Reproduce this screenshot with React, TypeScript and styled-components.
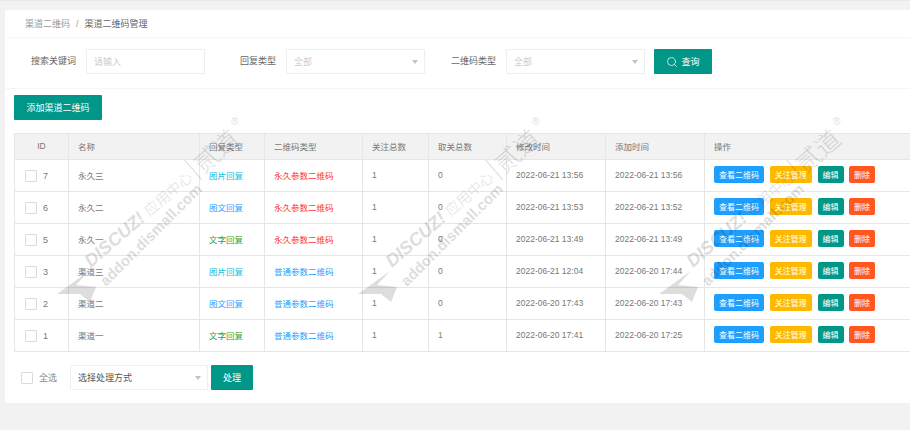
import React, { FC } from 'react';
import styled, { createGlobalStyle } from 'styled-components';
import { Search } from 'lucide-react';

const GlobalStyle = createGlobalStyle`
  html, body {
    margin: 0;
    padding: 0;
    height: 100%;
    overflow: hidden;
    background: #f2f2f2;
  }
  * {
    box-sizing: border-box;
  }
`;

const Page = styled.div`
  position: relative;
  width: 910px;
  height: 430px;
  padding: 9px 0 0 5px;
  overflow: hidden;
  border-top: 1px solid #e8e8e8;
  font-family: 'Liberation Sans', 'Noto Sans CJK SC', sans-serif;
  font-size: 9px;
  color: #666;
`;

const Card = styled.div`
  width: 960px;
  height: 393px;
  background: #fff;
`;

const Breadcrumb = styled.div`
  display: flex;
  align-items: center;
  gap: 6px;
  height: 28px;
  padding-left: 20px;
  border-bottom: 1px solid #f6f6f6;
  color: #999;
`;

const CrumbLast = styled.span`
  color: #666;
`;

const SearchRow = styled.div`
  display: flex;
  align-items: flex-start;
  height: 51px;
  padding-top: 11px;
  border-bottom: 1px solid #f6f6f6;
`;

const FieldLabel = styled.label`
  width: 81px;
  padding-right: 10px;
  line-height: 25px;
  text-align: right;
  color: #666;
`;

const Input = styled.div<{ $width: number }>`
  display: flex;
  align-items: center;
  justify-content: space-between;
  width: ${({ $width }) => $width}px;
  height: 25px;
  padding: 0 6px 0 7px;
  border: 1px solid #eee;
  border-radius: 1px;
  background: #fff;
  color: #ccc;
`;

const Caret = styled.i`
  width: 0;
  height: 0;
  border-top: 4px solid #c2c2c2;
  border-left: 3.5px solid transparent;
  border-right: 3.5px solid transparent;
`;

const PrimaryButton = styled.button`
  display: inline-flex;
  align-items: center;
  justify-content: center;
  gap: 3px;
  height: 25px;
  padding: 0;
  border: 0;
  border-radius: 1px;
  background: #009688;
  color: #fff;
  font: inherit;
`;

const QueryButton = styled(PrimaryButton)`
  width: 58px;
  margin-left: 9px;
`;

const Body = styled.div`
  padding: 6px 0 0 9px;
`;

const AddButton = styled(PrimaryButton)`
  display: flex;
  width: 88px;
`;

const Table = styled.table`
  width: 946px;
  margin-top: 13px;
  table-layout: fixed;
  border-collapse: collapse;
  font-size: 8.5px;
`;

const HeadCell = styled.th<{ $center?: boolean }>`
  height: 26px;
  padding: 0 0 2px ${({ $center }) => ($center ? 0 : 9)}px;
  border: 1px solid #e6e6e6;
  background: #f2f2f2;
  font-weight: 400;
  text-align: ${({ $center }) => ($center ? 'center' : 'left')};
  color: #777;
`;

const Cell = styled.td<{ $color?: string }>`
  height: 32px;
  padding: 0 0 2px 9px;
  border: 1px solid #e6e6e6;
  color: ${({ $color }) => $color || '#777'};
`;

const IdWrap = styled.div`
  display: flex;
  align-items: center;
  gap: 6px;
  margin-top: 2px;
  padding-left: 1px;
  font-size: 9px;
  color: #777;
`;

const Box = styled.span`
  display: inline-block;
  width: 12px;
  height: 12px;
  border: 1px solid #dcdcdc;
  border-radius: 1px;
  background: #fff;
`;

const Actions = styled.div`
  display: flex;
  gap: 5.5px;
`;

const Tag = styled.span<{ $bg: string; $width: number }>`
  display: flex;
  align-items: center;
  justify-content: center;
  width: ${({ $width }) => $width}px;
  height: 17px;
  border-radius: 2px;
  background: ${({ $bg }) => $bg};
  color: #fff;
  font-size: 8px;
`;

const Footer = styled.div`
  display: flex;
  align-items: center;
  margin-top: 13px;
  padding-left: 7px;
`;

const SelectAll = styled.span`
  margin: 0 13px 0 6px;
  color: #888;
`;

const ProcessSelect = styled(Input)`
  color: #555;
`;

const ProcessButton = styled(PrimaryButton)`
  width: 42px;
  margin-left: 3px;
`;

const MarkLayer = styled.div`
  position: absolute;
  top: 109px;
  left: 50px;
  width: 860px;
  height: 200px;
  pointer-events: none;
`;

const Mark = styled.svg<{ $left: number }>`
  position: absolute;
  top: 0;
  left: ${({ $left }) => $left}px;
  width: 210px;
  height: 200px;
  overflow: visible;
`;

const MarkTitle = styled.text`
  font-family: 'Liberation Sans', sans-serif;
  font-size: 18px;
  font-weight: 700;
  font-style: italic;
`;

const MarkCjk = styled.text<{ $size: number }>`
  font-family: 'Noto Sans CJK SC', sans-serif;
  font-size: ${({ $size }) => $size}px;
  font-weight: 300;
`;

const MarkUrl = styled.text`
  font-family: 'Liberation Sans', sans-serif;
  font-size: 15px;
  font-weight: 700;
`;

const MarkReg = styled.text`
  font-family: 'Liberation Sans', sans-serif;
  font-size: 10px;
`;

const columns = [54, 131, 65, 98, 66, 78, 99, 99, 256];
const heads = ['ID', '名称', '回复类型', '二维码类型', '关注总数', '取关总数', '修改时间', '添加时间', '操作'];

const CYAN = '#01c5e0';
const BLUE = '#1e9fff';
const GREEN = '#2f9e2f';
const RED = '#ff3333';

const rows = [
  { id: 7, name: '永久三', reply: '图片回复', replyColor: CYAN, type: '永久参数二维码', typeColor: RED, off: 0, mod: '2022-06-21 13:56', add: '2022-06-21 13:56' },
  { id: 6, name: '永久二', reply: '图文回复', replyColor: BLUE, type: '永久参数二维码', typeColor: RED, off: 0, mod: '2022-06-21 13:53', add: '2022-06-21 13:52' },
  { id: 5, name: '永久一', reply: '文字回复', replyColor: GREEN, type: '永久参数二维码', typeColor: RED, off: 0, mod: '2022-06-21 13:49', add: '2022-06-21 13:49' },
  { id: 3, name: '渠道三', reply: '图片回复', replyColor: CYAN, type: '普通参数二维码', typeColor: BLUE, off: 0, mod: '2022-06-21 12:04', add: '2022-06-20 17:44' },
  { id: 2, name: '渠道二', reply: '图文回复', replyColor: BLUE, type: '普通参数二维码', typeColor: BLUE, off: 0, mod: '2022-06-20 17:43', add: '2022-06-20 17:43' },
  { id: 1, name: '渠道一', reply: '文字回复', replyColor: GREEN, type: '普通参数二维码', typeColor: BLUE, off: 1, mod: '2022-06-20 17:41', add: '2022-06-20 17:25' },
];

const Watermark: FC<{ left: number }> = ({ left }) => (
  <Mark $left={left} viewBox="0 0 210 200">
    <g opacity="0.13" fill="#000">
      <polygon points="7,184 39,161 26,175 46,177 40,192 30,184" />
      <g transform="translate(41 158) rotate(-41)">
        <MarkTitle x="0" y="0">DISCUZ!</MarkTitle>
        <MarkCjk x="78" y="0" $size={14.5}>应用中心</MarkCjk>
        <rect x="141" y="-20" width="1" height="26" />
        <MarkCjk x="146" y="3" $size={25}>贰道</MarkCjk>
      </g>
      <g transform="translate(56 177) rotate(-45)">
        <MarkUrl x="0" y="0" textLength={137}>addon.dismall.com</MarkUrl>
      </g>
      <MarkReg x="181" y="15">®</MarkReg>
    </g>
  </Mark>
);

const App: FC = () => (
  <>
    <GlobalStyle />
    <Page>
      <Card>
        <Breadcrumb>
          <span>渠道二维码</span>
          <span>/</span>
          <CrumbLast>渠道二维码管理</CrumbLast>
        </Breadcrumb>
        <SearchRow>
          <FieldLabel>搜索关键词</FieldLabel>
          <Input $width={119}>请输入</Input>
          <FieldLabel>回复类型</FieldLabel>
          <Input $width={139}>全部<Caret /></Input>
          <FieldLabel>二维码类型</FieldLabel>
          <Input $width={139}>全部<Caret /></Input>
          <QueryButton>
            <Search size={12} strokeWidth={1.4} />
            查询
          </QueryButton>
        </SearchRow>
        <Body>
          <AddButton>添加渠道二维码</AddButton>
          <Table>
            <colgroup>
              {columns.map((w, i) => <col key={i} width={w} />)}
            </colgroup>
            <thead>
              <tr>
                {heads.map((h, i) => <HeadCell key={h} $center={i === 0}>{h}</HeadCell>)}
              </tr>
            </thead>
            <tbody>
              {rows.map(r => (
                <tr key={r.id}>
                  <Cell>
                    <IdWrap><Box />{r.id}</IdWrap>
                  </Cell>
                  <Cell>{r.name}</Cell>
                  <Cell $color={r.replyColor}>{r.reply}</Cell>
                  <Cell $color={r.typeColor}>{r.type}</Cell>
                  <Cell>1</Cell>
                  <Cell $color={r.off ? '#5a9e2f' : undefined}>{r.off}</Cell>
                  <Cell>{r.mod}</Cell>
                  <Cell>{r.add}</Cell>
                  <Cell>
                    <Actions>
                      <Tag $bg="#1e9fff" $width={50}>查看二维码</Tag>
                      <Tag $bg="#ffb800" $width={42.5}>关注管理</Tag>
                      <Tag $bg="#009688" $width={26}>编辑</Tag>
                      <Tag $bg="#ff5722" $width={26}>删除</Tag>
                    </Actions>
                  </Cell>
                </tr>
              ))}
            </tbody>
          </Table>
          <Footer>
            <Box />
            <SelectAll>全选</SelectAll>
            <ProcessSelect $width={138}>选择处理方式<Caret /></ProcessSelect>
            <ProcessButton>处理</ProcessButton>
          </Footer>
        </Body>
      </Card>
      <MarkLayer>
        <Watermark left={0} />
        <Watermark left={301} />
        <Watermark left={602} />
      </MarkLayer>
    </Page>
  </>
);

export default App;
